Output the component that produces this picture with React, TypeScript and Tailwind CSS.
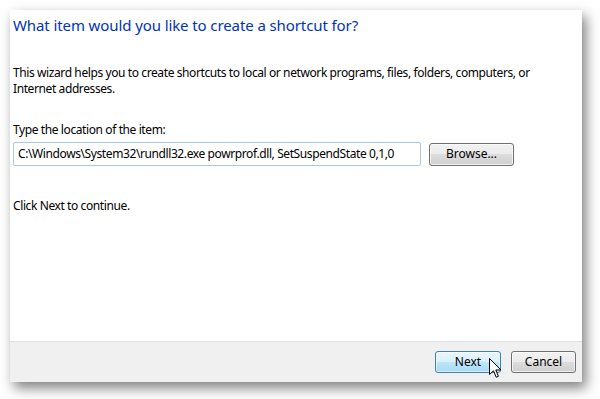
export default function App() {
  const font = { fontFamily: '"Segoe UI", "Noto Sans", "Liberation Sans", sans-serif' }

  return (
    <div className="w-[600px] h-[399px] bg-white pl-[10px] pt-[10px]" style={font}>
      <div className="relative w-[572px] h-[372px] flex flex-col bg-white shadow-[4px_6px_12px_rgba(0,0,0,0.5)]">
        {/* body */}
        <div className="flex-1 pl-[3px] pt-[5px] text-[12px] text-black">
          <h1 className="text-[15px] leading-[20px] text-[#0033bb] tracking-[-0.1px]">
            What item would you like to create a shortcut for?
          </h1>

          <p className="mt-[30px] leading-[16px] tracking-[-0.4px] pr-[20px]">
            This wizard helps you to create shortcuts to local or network programs, files, folders, computers, or
            Internet addresses.
          </p>

          <div className="mt-[25px] leading-[16px] tracking-[-0.4px]">Type the location of the item:</div>

          <div className="mt-[4px] flex items-center gap-[8px]">
            <div className="w-[408px] h-[24px] border border-[#a8c9e6] rounded-[2px] pl-[4px] flex items-center tracking-[-0.4px]">
              C:\Windows\System32\rundll32.exe powrprof.dll, SetSuspendState 0,1,0
            </div>
            <button className="w-[85px] h-[23px] rounded-[3px] border border-[#707070] bg-[linear-gradient(#f2f2f2_0%,#ebebeb_50%,#dddddd_50%,#cfcfcf_100%)] text-[12px] shadow-[inset_0_0_0_1px_rgba(255,255,255,0.7)]">
              Browse...
            </button>
          </div>

          <div className="mt-[32px] leading-[16px] tracking-[-0.4px]">Click Next to continue.</div>
        </div>

        {/* footer */}
        <div className="h-[41px] bg-[#f0f0f0] border-t border-[#dfdfdf] flex items-center justify-end gap-[10px] pr-[6px] pb-[1px]">
          <button className="w-[66px] h-[22px] rounded-[3px] border border-[#3c7fb1] bg-[linear-gradient(#eaf6fd_0%,#d9f0fc_50%,#bee6fd_50%,#a7d9f5_100%)] text-[12px] shadow-[inset_0_0_0_1px_rgba(255,255,255,0.6)]">
            Next
          </button>
          <button className="w-[65px] h-[22px] rounded-[3px] border border-[#707070] bg-[linear-gradient(#f2f2f2_0%,#ebebeb_50%,#dddddd_50%,#cfcfcf_100%)] text-[12px] shadow-[inset_0_0_0_1px_rgba(255,255,255,0.7)]">
            Cancel
          </button>
        </div>

        {/* mouse pointer */}
        <svg className="absolute left-[479px] top-[348px]" width="13" height="21" viewBox="0 0 13 21">
          <path
            d="M0.5 0.5 L0.5 16.5 L4.5 12.8 L7.2 19.2 L9.4 18.3 L6.8 12 L12 12 Z"
            fill="white"
            stroke="black"
            strokeWidth="1"
            strokeLinejoin="miter"
          />
        </svg>
      </div>
    </div>
  )
}
